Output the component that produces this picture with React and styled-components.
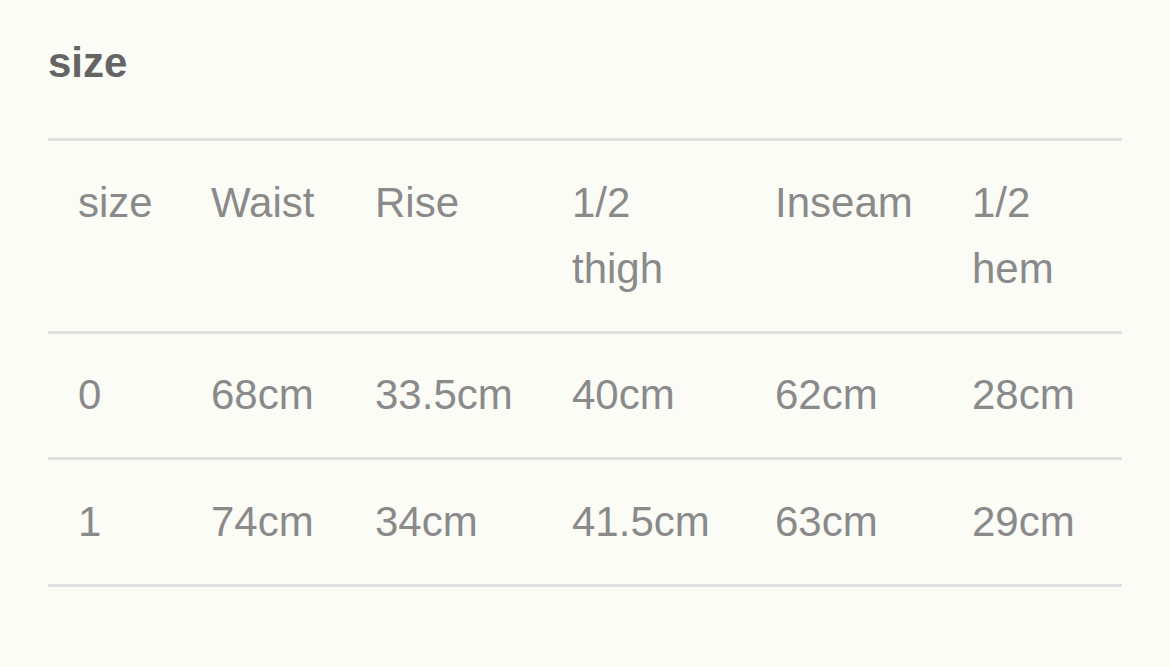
import { createGlobalStyle, styled } from 'styled-components';

const GlobalStyle = createGlobalStyle`
  html, body {
    margin: 0;
    padding: 0;
    background: #fcfcf7;
  }
  body {
    font-family: 'Liberation Sans', Arial, sans-serif;
  }
`;

const columns = [
  { label: 'size', width: 133 },
  { label: 'Waist', width: 164 },
  { label: 'Rise', width: 197 },
  { label: '1/2 thigh', width: 203 },
  { label: 'Inseam', width: 197 },
  { label: '1/2 hem', width: 180 },
];

const rows = [
  ['0', '68cm', '33.5cm', '40cm', '62cm', '28cm'],
  ['1', '74cm', '34cm', '41.5cm', '63cm', '29cm'],
];

const App = () => {
  return (
    <>
      <GlobalStyle />
      <Page>
        <Title>size</Title>
        <Table>
          <colgroup>
            {columns.map((c) => (
              <col key={c.label} width={c.width} />
            ))}
          </colgroup>
          <thead>
            <Row>
              {columns.map((c) => (
                <Cell as="th" key={c.label}>
                  {c.label}
                </Cell>
              ))}
            </Row>
          </thead>
          <tbody>
            {rows.map((r, i) => (
              <Row key={i}>
                {r.map((v, j) => (
                  <Cell key={j} nowrap>
                    {v}
                  </Cell>
                ))}
              </Row>
            ))}
          </tbody>
        </Table>
      </Page>
    </>
  );
};

export default App;

const Page = styled.main`
  padding: 30px 48px 0 48px;
  min-height: 667px;
  box-sizing: border-box;
`;

const Title = styled.h2`
  margin: 0 0 42px 0;
  font-size: 42px;
  line-height: 66px;
  font-weight: 700;
  color: #646464;
`;

const Table = styled.table`
  width: 1074px;
  table-layout: fixed;
  border-collapse: collapse;
  border-top: 3px solid #e1e1e1;
`;

const Row = styled.tr`
  border-bottom: 3px solid #e1e1e1;
`;

const Cell = styled.td`
  padding: 28.75px 30px;
  font-size: 42px;
  line-height: 66px;
  font-weight: 400;
  color: #8a8a8a;
  text-align: left;
  vertical-align: top;
  white-space: ${({ nowrap }) => (nowrap ? 'nowrap' : 'normal')};
`;
